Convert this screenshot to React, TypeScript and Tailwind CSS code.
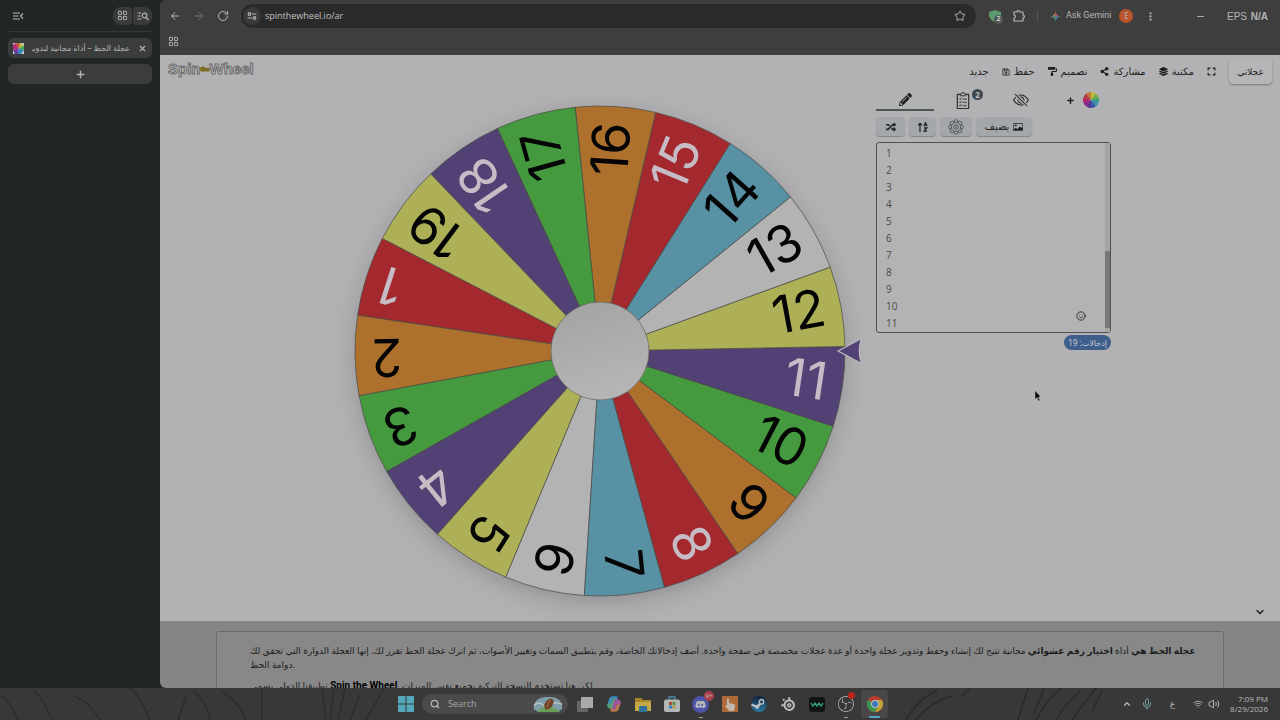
import { useState } from 'react'
import type { ReactNode } from 'react'
import {
  FaExpand, FaLayerGroup, FaPaintRoller, FaPencilAlt, FaRandom, FaRegSave, FaShareAlt, FaDiscord,
} from 'react-icons/fa'
import { BsCardImage, BsEyeSlash } from 'react-icons/bs'
import { SiObsstudio, SiSteam, SiSteelseries } from 'react-icons/si'
import {
  ArrowLeft, ArrowRight, ChevronDown, ChevronUp, LayoutGrid, Mic, MoreVertical,
  Plus, RotateCw, Search, Smile, Star, Volume2, Wifi, X,
} from 'lucide-react'

const COLORS = ['#a3292e', '#ad702d', '#459a3f', '#524174', '#adb057', '#b4b3b4', '#5890a4']
const COUNT = 19
const STEP = 360 / COUNT
const START = 8.4
const CX = 600
const CY = 351
const OUTER = 245
const INNER = 49

const point = (r: number, deg: number) => {
  const a = (deg * Math.PI) / 180
  return `${(CX + r * Math.cos(a)).toFixed(2)} ${(CY + r * Math.sin(a)).toFixed(2)}`
}

function Wheel() {
  const slices = Array.from({ length: COUNT }, (_, i) => {
    const color = COLORS[i % COLORS.length]
    const light = color === '#a3292e' || color === '#524174'
    return { n: i + 1, color, text: light ? '#c6bcc6' : '#050505', mid: START + (10 - i) * STEP }
  })

  return (
    <svg viewBox="300 89 570 532" className="w-[570px] shrink-0" role="img" aria-label="عجلة الحظ">
      <defs>
        <radialGradient id="halo" gradientUnits="userSpaceOnUse" cx={CX} cy={CY + 6} r="275">
          <stop offset="0.86" stopColor="#77777c" stopOpacity="0.5" />
          <stop offset="0.92" stopColor="#8d8d92" stopOpacity="0.2" />
          <stop offset="1" stopColor="#b2b2b4" stopOpacity="0" />
        </radialGradient>
        <linearGradient id="hub" x1="0" y1="0" x2="0.3" y2="1">
          <stop offset="0" stopColor="#a2a2a3" />
          <stop offset="1" stopColor="#b5b5b6" />
        </linearGradient>
      </defs>
      <circle cx={CX} cy={CY + 6} r="275" fill="url(#halo)" />
      {slices.map(s => (
        <path
          key={s.n}
          d={`M${point(INNER, s.mid - STEP / 2)} L${point(OUTER, s.mid - STEP / 2)} A${OUTER} ${OUTER} 0 0 1 ${point(OUTER, s.mid + STEP / 2)} L${point(INNER, s.mid + STEP / 2)} Z`}
          fill={s.color}
          stroke="#4b4b43"
          strokeWidth="0.7"
        />
      ))}
      {slices.map(s => (
        <text
          key={s.n}
          x={CX + 229}
          y={CY + 16}
          transform={`rotate(${s.mid} ${CX} ${CY})`}
          textAnchor="end"
          fill={s.text}
          className="font-['Inter',sans-serif] text-[52px]"
        >
          {s.n}
        </text>
      ))}
      <circle cx={CX} cy={CY} r={INNER} fill="url(#hub)" stroke="#68685f" strokeWidth="0.7" />
      <path d="M838 351 L861.500 338.500 Q857 351 861.500 363.500 Z" fill="#524174" stroke="#bdb9c2" strokeWidth="1.200" />
    </svg>
  )
}

function ColorWheel({ className }: { className: string }) {
  const fills = ['#c6b83c', '#6fae43', '#39a17a', '#3f8fb5', '#3b55a8', '#5b3190', '#8b2285', '#b32560', '#b33a3c', '#bd7a37']
  return (
    <svg viewBox="-10 -10 20 20" className={className}>
      {fills.map((f, i) => {
        const a = ((i * 36 - 90) * Math.PI) / 180
        const b = ((i * 36 - 54) * Math.PI) / 180
        return <path key={f} fill={f} d={`M0 0L${10 * Math.cos(a)} ${10 * Math.sin(a)}A10 10 0 0 1 ${10 * Math.cos(b)} ${10 * Math.sin(b)}Z`} />
      })}
    </svg>
  )
}

function Sidebar() {
  return (
    <aside className="w-40 shrink-0 px-2 text-[#b4b6b5]">
      <div className="flex h-8 items-center justify-between border-b border-[#343837] pl-1">
        <button aria-label="Collapse tabs">
          <svg viewBox="0 0 12 10" className="h-[10px] w-3" fill="none" stroke="currentColor" strokeWidth="1.200">
            <path d="M1 2h7M1 5h5.500M1 8h7M11 2.500L8.500 5 11 7.500" />
          </svg>
        </button>
        <div className="flex gap-px">
          <button aria-label="Tab groups" className="flex h-[18px] w-[19px] items-center justify-center rounded-l-lg rounded-r-sm bg-[#393c3b]">
            <LayoutGrid size={11} />
          </button>
          <button aria-label="Search tabs" className="flex h-[18px] w-[19px] items-center justify-center rounded-l-sm rounded-r-lg bg-[#393c3b]">
            <svg viewBox="0 0 12 10" className="h-[10px] w-3" fill="none" stroke="currentColor" strokeWidth="1.200">
              <path d="M0.500 2h3.500M0.500 5h3M0.500 8h4M9 6.500l2.500 2.500" />
              <circle cx="7.500" cy="4.500" r="2.300" />
            </svg>
          </button>
        </div>
      </div>
      <div className="mt-[6px] flex h-5 items-center gap-2 rounded-md bg-[#3b3d3c] px-[5px]">
        <svg viewBox="0 0 11 11" className="size-[11px] shrink-0">
          <path fill="#c7c9c8" d="M0 0h11v11H0z" />
          <path fill="#b72d7a" d="M5.500 5.500L0 7V2l3-2z" />
          <path fill="#c5542d" d="M5.500 5.500L3 0h4z" />
          <path fill="#b6b43b" d="M5.500 5.500L7 0l4 3z" />
          <path fill="#44a557" d="M5.500 5.500L11 3v4z" />
          <path fill="#3687b7" d="M5.500 5.500L11 7l-3 4H5z" />
          <path fill="#6a3a9e" d="M5.500 5.500L5 11H2L0 7z" />
        </svg>
        <span dir="rtl" className="min-w-0 flex-1 overflow-hidden text-[8px] whitespace-nowrap">عجلة الحظ – أداة مجانية لتدوير</span>
        <button aria-label="Close tab"><X size={9} strokeWidth={3} /></button>
      </div>
      <button aria-label="New tab" className="mt-[6px] flex h-5 w-full items-center justify-center rounded-md bg-[#3b3d3c]">
        <Plus size={11} strokeWidth={3} />
      </button>
    </aside>
  )
}

function Toolbar() {
  return (
    <header className="h-[55px] bg-[#3e3e3e] text-[#b5b5b5]">
      <div className="flex h-8 items-center pl-[9px]">
        <div className="flex gap-3">
          <button aria-label="Back"><ArrowLeft size={12} /></button>
          <button aria-label="Forward" className="text-[#777]"><ArrowRight size={12} /></button>
          <button aria-label="Reload"><RotateCw size={12} /></button>
        </div>
        <div className="ml-3 flex h-6 flex-1 items-center rounded-full bg-[#2a2a2a] pr-[10px] pl-[2px]">
          <span className="flex size-[18px] items-center justify-center rounded-full bg-[#3a3a3a]">
            <svg viewBox="0 0 10 10" className="size-[10px]" fill="none" stroke="currentColor" strokeWidth="1.200">
              <circle cx="2.500" cy="3" r="1.300" />
              <circle cx="7.500" cy="7" r="1.300" />
              <path d="M5 3h4.500M0.500 7H5" />
            </svg>
          </span>
          <input
            aria-label="Address"
            defaultValue="spinthewheel.io/ar"
            className="ml-1 min-w-0 flex-1 bg-transparent font-['Open_Sans',sans-serif] text-[9px] text-[#c2c2c2] outline-none"
          />
          <button aria-label="Bookmark"><Star size={12} /></button>
        </div>
        <div className="flex w-[304px] shrink-0 items-center pr-3 pl-[13px]">
          <button aria-label="Shield" className="relative">
            <svg viewBox="0 0 12 12" className="size-3"><path d="M0 2l6-2 6 2v3c0 3-3 6-6 7C3 11 0 8 0 5z" fill="#5c9a72" /></svg>
            <span className="absolute top-[5px] left-[5px] flex size-[9px] items-center justify-center rounded-full bg-[#555a57] text-[7px] font-bold text-[#ccc]">2</span>
          </button>
          <button aria-label="Extensions" className="ml-3">
            <svg viewBox="0 0 12 12" className="size-3" fill="none" stroke="currentColor" strokeWidth="1.200">
              <path d="M1 2h3q0-1.400 1.300-1.400T6.600 2H10v3q1.400 0 1.400 1.400T10 7.800V11H1V8q1.500 0 1.500-1.500T1 5z" strokeLinejoin="round" />
            </svg>
          </button>
          <span className="ml-3 h-3 w-px bg-[#575757]" />
          <button className="ml-3 flex items-center gap-[5px] font-['Roboto',sans-serif] text-[9px] whitespace-nowrap">
            <svg viewBox="0 0 12 12" className="size-[11px]">
              <path d="M6 0Q5.500 5.500 0 6h6z" fill="#b98d54" />
              <path d="M6 0q.5 5.500 6 6H6z" fill="#b75757" />
              <path d="M12 6Q6.500 6.500 6 12V6z" fill="#5081c4" />
              <path d="M0 6q5.500.5 6 6V6z" fill="#519580" />
            </svg>
            Ask Gemini
          </button>
          <button aria-label="Profile" className="ml-2 flex size-[14px] items-center justify-center rounded-full bg-[#b9532b] text-[8px]">E</button>
          <button aria-label="Menu" className="ml-3"><MoreVertical size={11} strokeWidth={3} /></button>
          <span className="ml-auto h-px w-[7px] bg-[#aaa]" />
          <span className="ml-[23px] font-['Liberation_Sans',sans-serif] text-[10px] whitespace-nowrap">EPS <b className="ml-px">N/A</b></span>
        </div>
      </div>
      <button aria-label="Apps" className="mt-1 ml-2 block"><LayoutGrid size={11} /></button>
    </header>
  )
}

function NavLink({ label, icon }: { label: string; icon?: ReactNode }) {
  return (
    <a href="#" className="flex items-center gap-1">
      {icon}
      <span>{label}</span>
    </a>
  )
}

function ToolButton({ label, className, children }: { label: string; className: string; children: ReactNode }) {
  return (
    <button aria-label={label} className={`flex h-[19px] items-center justify-center gap-1 rounded-sm bg-[#a5a8aa] shadow-[0_1px_1px_#85868a] ${className}`}>
      {children}
    </button>
  )
}

function EntriesPanel() {
  const [entries, setEntries] = useState(Array.from({ length: 11 }, (_, i) => i + 1).join('\n'))

  return (
    <section className="ml-[6px] w-[235px] shrink-0 text-[#222]">
      <div className="flex h-[22px]">
        <button aria-label="Edit" className="flex w-[58px] items-center justify-center border-b-2 border-[#4d5752]"><FaPencilAlt size={13} /></button>
        <button aria-label="Results" className="relative flex w-[58px] items-center justify-center text-[#333]">
          <svg viewBox="0 0 14 18" className="h-[17px] w-[14px]" fill="none" stroke="currentColor">
            <path d="M4 2.500H1v15h12v-15h-3" strokeWidth="1.300" />
            <path d="M4 4V2h1.500Q5.500.6 7 .6T8.500 2H10v2z" />
            <path d="M3 7l1 1 1.300-2M3 10.500l1 1 1.300-2M3 14l1 1 1.300-2M6.500 7.500H11M6.500 11H11M6.500 14.500H11" />
          </svg>
          <span className="absolute top-0 right-[9px] flex size-[11px] items-center justify-center rounded-full bg-[#3c474d] text-[8px] font-bold text-[#c0c0c0]">2</span>
        </button>
        <button aria-label="Hide" className="flex w-[58px] items-center justify-center"><BsEyeSlash size={16} /></button>
        <button aria-label="Add wheel" className="flex items-center gap-2 pl-4">
          <Plus size={9} strokeWidth={4} />
          <ColorWheel className="size-4" />
        </button>
      </div>
      <div className="mt-[6px] flex gap-1">
        <ToolButton label="Shuffle" className="w-[29px]"><FaRandom size={10} /></ToolButton>
        <ToolButton label="Sort" className="w-[27px]">
          <svg viewBox="0 0 10 10" className="size-[10px]" fill="none" stroke="currentColor" strokeWidth="1.300">
            <path d="M2 10V1.500M0 3.300l2-2 2 2M6 4.200l1.500-3.500L9 4.200M6.500 3.200h2M6 6h2.800L6.200 9.200H9" />
          </svg>
        </ToolButton>
        <ToolButton label="Customize" className="w-8">
          <svg viewBox="-8 -8 16 16" className="size-4" fill="none" stroke="#44484a" strokeWidth="0.800">
            {[0, 45, 90, 135, 180, 225, 270, 315].map(a => (
              <path key={a} transform={`rotate(${a})`} d="M-1.900 -4.600Q-2.500 -7.200 0 -7.400Q2.500 -7.200 1.900 -4.600" />
            ))}
            <circle r="4.600" />
            <circle r="2.300" />
            <path d="M0 -1.500v3" />
          </svg>
        </ToolButton>
        <ToolButton label="يضيف" className="w-14 text-[10px]"><span>يضيف</span><BsCardImage size={10} /></ToolButton>
      </div>
      <div className="relative mt-[6px]">
        <textarea
          aria-label="إدخالات"
          value={entries}
          onChange={e => setEntries(e.target.value)}
          className="block h-[191px] w-full resize-none overflow-hidden rounded-[3px] border border-[#4f524e] bg-[#b3b3b3] px-[9px] py-[2px] font-['Open_Sans',sans-serif] text-[10px] leading-[17px] text-[#4a4a4a] outline-none"
        />
        <div className="absolute inset-y-px right-px flex w-[5px] flex-col justify-end bg-[#a5a5a5] pb-1">
          <div className="h-[77px] bg-[#777]" />
        </div>
        <button aria-label="Emoji" className="absolute right-[25px] bottom-3"><Smile size={10} /></button>
      </div>
      <div className="mt-[2px] flex justify-end">
        <span className="flex h-[15px] items-center rounded-full bg-[#3f5e8b] px-1 text-[8px] text-[#c5cdd8]">إدخالات: 19</span>
      </div>
    </section>
  )
}

function SitePage() {
  return (
    <section className="relative shrink-0 bg-[#b2b2b4]">
      <div className="flex h-[34px] items-start justify-between px-2 pt-1 text-[#1e1e1e]">
        <a href="#" aria-label="Spin the Wheel" className="flex items-center font-['Liberation_Sans',sans-serif] text-[15px] leading-5 font-bold text-[#bebebe] [-webkit-text-stroke:1px_#6b6b6b]">
          Spin
          <span className="text-[6px] text-[#a68c1d] [-webkit-text-stroke:1px_#7a6a20]">the</span>
          Wheel
        </a>
        <nav className="flex h-[25px] items-center gap-[13px] text-[10px]">
          <NavLink label="جديد" />
          <NavLink label="حفظ" icon={<FaRegSave size={8} />} />
          <NavLink label="تصميم" icon={<FaPaintRoller size={9} />} />
          <NavLink label="مشاركة" icon={<FaShareAlt size={9} />} />
          <NavLink label="مكتبة" icon={<FaLayerGroup size={9} />} />
          <button aria-label="Fullscreen"><FaExpand size={9} /></button>
          <button className="h-[25px] w-[43px] rounded-sm bg-[#b6b6b8] text-[9px] shadow-[0_1px_2px_#77777a]">عجلاتي</button>
        </nav>
      </div>
      <div className="flex pl-[140px]">
        <Wheel />
        <EntriesPanel />
      </div>
      <button aria-label="Scroll down" className="absolute right-[14px] bottom-[3px] text-[#222]"><ChevronDown size={12} strokeWidth={3} /></button>
    </section>
  )
}

function Article() {
  return (
    <section className="min-h-0 flex-1 overflow-hidden bg-[#858587] px-14 pt-[10px]">
      <article className="h-24 rounded-t-[3px] border border-[#6b6b6b] bg-[#888] px-[33px] pt-3 text-[9px] leading-[14px] whitespace-nowrap text-[#1c1c1c]">
        <p>
          <b>عجلة الحظ هي</b> أداة <b>اختيار رقم عشوائي</b> مجانية تتيح لك إنشاء وحفظ وتدوير عجلة واحدة أو عدة عجلات مخصصة في صفحة واحدة. أضف إدخالاتك الخاصة، وقم بتطبيق السمات وتغيير الأصوات، ثم اترك عجلة الحظ تقرر لك. إنها العجلة الدوارة التي تحقق لك
          <br />
          دوامة الحظ.
        </p>
        <p className="mt-[7px]">
          تطبيقنا الدولي يسمى <b className="font-['Roboto',sans-serif] text-[10px] text-black">Spin the Wheel</b>. لكن هنا تستخدم النسخة التركية بجميع نفس الميزات.
        </p>
      </article>
    </section>
  )
}

function TaskIcon({ label, children }: { label: string; children: ReactNode }) {
  return <button aria-label={label} className="relative flex h-7 w-[29px] items-center justify-center">{children}</button>
}

function Taskbar() {
  return (
    <footer className="relative flex h-8 shrink-0 items-center bg-[#383838] text-[#b9b9b9]">
      {/* wallpaper strands showing through the bar */}
      <svg viewBox="0 0 1280 32" preserveAspectRatio="none" className="absolute inset-0 size-full" fill="none" stroke="#2a2a2a" strokeWidth="1.200">
        <path d="M18 32Q10 14 2 8M52 32Q44 12 34 2M100 32Q90 14 74 8M150 32Q142 10 130 0M178 32L186 8M210 32Q206 12 194 4M246 32Q240 14 222 4M262 32V0M322 0L326 32M334 0L330 32M345 0L338 32M360 6L350 32M384 0L366 32" />
        <path d="M906 32Q918 10 938 2M916 32Q930 14 952 8M962 8L970 0M1018 32L1028 0M1034 26L1044 0M1036 32Q1048 10 1062 0M1056 32Q1066 14 1080 4M1072 32Q1086 12 1096 0M1092 24L1102 2" strokeWidth="1.500" />
      </svg>
      <div className="relative flex flex-1 items-center justify-center">
        <TaskIcon label="Start">
          <svg viewBox="0 0 15 15" className="size-4" fill="#55a9bd"><path d="M0 0h7v7H0zM8 0h7v7H8zM0 8h7v7H0zM8 8h7v7H8z" /></svg>
        </TaskIcon>
        <label className="mx-[2px] flex h-5 w-[146px] items-center gap-2 rounded-full bg-[#4a4a4a] pr-1 pl-2">
          <Search size={10} strokeWidth={3} className="shrink-0" />
          <input aria-label="Search" placeholder="Search" className="min-w-0 flex-1 bg-transparent font-['Open_Sans',sans-serif] text-[9px] outline-none placeholder:text-[#a8a8a8]" />
          <svg viewBox="0 0 32 18" className="h-[17px] w-8 shrink-0">
            <path d="M1 14Q0 2 14 1h6q12 2 11 13l-6 3H6z" fill="#7d9da7" />
            <path d="M4 17Q16 6 29 17z" fill="#6b9d58" />
            <path d="M1 10Q8 4 14 13M31 9Q22 4 17 13" stroke="#b9c4c4" strokeWidth="1.500" fill="none" />
            <ellipse cx="17" cy="8.500" rx="4" ry="6.500" transform="rotate(35 17 8.500)" fill="#704027" />
            <path d="M15 12Q15 8 19 4" stroke="#aa7650" fill="none" />
          </svg>
        </label>
        <TaskIcon label="Task view">
          <svg viewBox="0 0 16 15" className="h-[15px] w-4"><path fill="#666" d="M0 4h11v11H0z" /><path fill="#aaa" d="M4 0h12v11H4z" /></svg>
        </TaskIcon>
        <TaskIcon label="Copilot">
          <svg viewBox="0 0 16 16" className="size-4" strokeLinecap="round" strokeWidth="3.500" fill="none">
            <path d="M3 9L5 3q.5-1 2-1h3" stroke="#398fc0" />
            <path d="M3 9q0 2 2 2h1l2-7" stroke="#579c73" />
            <path d="M13 7l-2 6q-.5 1-2 1H6" stroke="#b77a47" />
            <path d="M13 7q0-2-2-2h-1L8 12" stroke="#9e56a1" />
          </svg>
        </TaskIcon>
        <TaskIcon label="Files">
          <svg viewBox="0 0 16 15" className="h-[15px] w-4"><path fill="#a8872b" d="M0 1h6l2 2h8v11H0z" /><path fill="#c5a846" d="M0 5h16v9H0z" /><path fill="#30709a" d="M4 10q0-1 1-1h6q1 0 1 1v5H4z" /></svg>
        </TaskIcon>
        <TaskIcon label="Store">
          <svg viewBox="0 0 16 16" className="size-4">
            <path d="M5 4V1h6v3" stroke="#4b8caa" strokeWidth="1.300" fill="none" />
            <rect y="3.500" width="16" height="12.500" rx="2" fill="#b2b6b7" />
            <path fill="#ad4a35" d="M5 6h3v3H5z" /><path fill="#5a933e" d="M8.500 6h3v3h-3z" /><path fill="#3283b3" d="M5 9.500h3v3H5z" /><path fill="#bd9838" d="M8.500 9.500h3v3h-3z" />
          </svg>
        </TaskIcon>
        <TaskIcon label="Discord">
          <span className="flex size-[17px] items-center justify-center rounded-full bg-[#4e55a8]"><FaDiscord size={11} /></span>
          <span className="absolute top-px right-px flex size-[10px] items-center justify-center rounded-full bg-[#a83e49] text-[6px]">9+</span>
          <span className="absolute bottom-0 h-px w-1 bg-[#999]" />
        </TaskIcon>
        <TaskIcon label="Auto clicker">
          <svg viewBox="0 0 16 16" className="size-4"><path fill="#ad6a39" d="M0 0h16v16H0z" /><path fill="#c0b8ae" d="M5 3q1-1 2 0v4l5 1q1 0 1 2l-1 5H7l-4-5q1-2 2 0z" /></svg>
        </TaskIcon>
        <TaskIcon label="Steam">
          <svg viewBox="0 0 16 16" className="size-4">
            <defs>
              <linearGradient id="steam" x1="0" y1="0" x2="0" y2="1">
                <stop offset="0" stopColor="#14203a" />
                <stop offset="1" stopColor="#2a7ba3" />
              </linearGradient>
            </defs>
            <circle cx="8" cy="8" r="8" fill="url(#steam)" />
            <path d="M0.500 8.500L6 11M7 10l3-3.500" stroke="#b9c2c8" strokeWidth="2.400" />
            <circle cx="10.500" cy="5.800" r="2.300" fill="#2b4560" stroke="#b9c2c8" strokeWidth="1.300" />
            <circle cx="6.200" cy="10.800" r="2.100" fill="#b9c2c8" />
          </svg>
        </TaskIcon>
        <TaskIcon label="SteelSeries"><SiSteelseries size={14} /></TaskIcon>
        <TaskIcon label="Audio">
          <svg viewBox="0 0 16 16" className="size-4"><rect y="1" width="16" height="15" rx="3" fill="#101413" /><path d="M2 7l2 3 2-3 2 3 2-3 2 3 2-3" stroke="#36a585" strokeWidth="1.300" fill="none" /></svg>
        </TaskIcon>
        <TaskIcon label="OBS">
          <SiObsstudio size={16} />
          <span className="absolute top-[2px] right-[5px] size-[7px] rounded-full bg-[#bd241c]" />
          <span className="absolute bottom-0 h-px w-1 bg-[#999]" />
        </TaskIcon>
        <TaskIcon label="Chrome">
          <span className="absolute inset-x-px inset-y-0 rounded-sm bg-[#484848]" />
          <svg viewBox="-8 -8 16 16" className="relative size-4">
            <circle r="8" fill="#b83c30" />
            <path d="M-6.930 -4A8 8 0 0 0 0 8L3.460 2 0 0z" fill="#3a9750" />
            <path d="M6.930 -4A8 8 0 0 1 0 8L3.460 2 0 -4z" fill="#c1a036" />
            <circle r="4" fill="#c1c1c1" /><circle r="3" fill="#3b78bc" />
          </svg>
          <span className="absolute bottom-0 h-[2px] w-[11px] rounded bg-[#5ba3c7]" />
        </TaskIcon>
      </div>
      <div className="absolute inset-y-0 right-3 flex items-center">
        <button aria-label="Hidden icons"><ChevronUp size={10} strokeWidth={3} /></button>
        <Mic size={12} className="ml-[9px] text-[#77a3a0]" />
        <span className="ml-[17px] text-[9px]">ع</span>
        <Wifi size={10} className="ml-[18px]" />
        <Volume2 size={12} className="ml-[5px]" />
        <time className="ml-[10px] text-right font-['Open_Sans',sans-serif] text-[8px] leading-[10px]">7:09 PM<br />8/29/2026</time>
      </div>
    </footer>
  )
}

export default function App() {
  return (
    <div className="relative flex h-screen flex-col overflow-hidden bg-[#222625] font-['Noto_Sans','DejaVu_Sans',sans-serif]">
      <div className="flex min-h-0 flex-1">
        <Sidebar />
        <main className="flex min-w-0 flex-1 flex-col overflow-hidden rounded-l-md">
          <Toolbar />
          <SitePage />
          <Article />
        </main>
      </div>
      <Taskbar />
      <svg viewBox="0 0 8 12" className="absolute top-[390px] left-[1034px] h-3 w-2"><path d="M1 0.500v9l2-2 1.500 3.500 1.500-.6L4.500 7H7z" fill="#050505" stroke="#b0b0b0" strokeWidth="0.600" /></svg>
    </div>
  )
}
